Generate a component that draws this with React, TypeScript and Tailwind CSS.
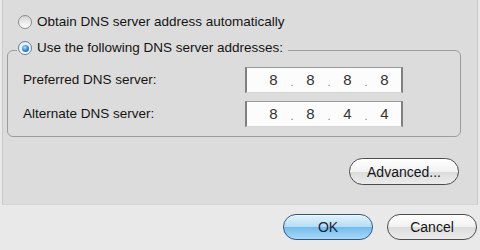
import React from "react";

const Radio = ({ checked }: { checked?: boolean }) => (
  <span
    className={`flex h-[14px] w-[14px] shrink-0 items-center justify-center rounded-full border ${
      checked
        ? "border-[#5a7ea6] bg-[linear-gradient(to_bottom,#e4edf5,#ffffff)]"
        : "border-[#8c8c8c] bg-[linear-gradient(to_bottom,#d4d4d4,#ffffff)]"
    }`}
  >
    {checked && (
      <span className="h-[7px] w-[7px] rounded-full bg-[radial-gradient(circle_at_40%_35%,#a8dcff,#2f78c8_60%,#1c4f90)]" />
    )}
  </span>
);

const IpBox = ({ parts }: { parts: string[] }) => (
  <div className="flex h-[26px] w-[158px] items-center border-x-2 border-t border-b border-x-[#808080] border-t-[#9a9a9a] border-b-[#d6d6d6] bg-[#fcfcfc] pl-[16px] text-[15px] text-[#333]">
    {parts.map((p, i) => (
      <React.Fragment key={i}>
        {i > 0 && <span className="w-[16px] pt-[4px] text-center text-[11px] text-[#777]">.</span>}
        <span className="w-[21px] text-center">{p}</span>
      </React.Fragment>
    ))}
  </div>
);

const App = () => {
  return (
    <div className="h-[250px] w-[480px] overflow-hidden bg-[#e9e9e9] font-['Liberation_Sans',Arial,sans-serif] text-[13.5px] leading-[16px] text-[#141414]">
      {/* Tab page */}
      <div className="ml-[2px] h-[205px] w-[476px] border-x border-b border-x-[#c9c9c9] border-b-[#d4d4d4] bg-[#dcdcdc]">
        <div className="ml-[15px] flex items-center gap-[5px] pt-[14px]">
          <Radio />
          <span>Obtain DNS server address automatically</span>
        </div>

        <fieldset className="ml-[4px] mt-[10px] w-[454px] rounded-[6px] border border-[#9c9c9c] pb-[9px]">
          <legend className="ml-[9px] flex items-center gap-[5px] pb-[4px] pl-[1px] pr-[5px]">
            <Radio checked />
            <span>Use the following DNS server addresses:</span>
          </legend>

          <div className="flex flex-col gap-[8px] pt-[7px]">
            <div className="flex items-center">
              <span className="w-[237px] pl-[15px]">Preferred DNS server:</span>
              <IpBox parts={["8", "8", "8", "8"]} />
            </div>
            <div className="flex items-center">
              <span className="w-[237px] pl-[15px]">Alternate DNS server:</span>
              <IpBox parts={["8", "8", "4", "4"]} />
            </div>
          </div>
        </fieldset>

        <div className="flex justify-end pr-[18px] pt-[21px]">
          <button className="h-[27px] w-[110px] rounded-full border border-[#4d4d4d] bg-[linear-gradient(to_bottom,#ffffff,#f2f2f2_50%,#dcdcdc_51%,#ececec)] text-[14px] text-[#151515] shadow-[inset_0_1px_0_#ffffff]">
            Advanced...
          </button>
        </div>
      </div>

      {/* Dialog buttons */}
      <div className="flex justify-end gap-[14px] pr-[3px] pt-[9px]">
        <button className="h-[26px] w-[90px] rounded-full border border-[#2c5684] bg-[linear-gradient(to_bottom,#e2f3fd,#b5dcf6_50%,#74bbee_51%,#a9d9f7)] text-[14px] text-[#1a2438] shadow-[inset_0_1px_0_#f4fbff]">
          OK
        </button>
        <button className="h-[26px] w-[90px] rounded-full border border-[#4d4d4d] bg-[linear-gradient(to_bottom,#ffffff,#f2f2f2_50%,#dcdcdc_51%,#ececec)] text-[14px] text-[#151515] shadow-[inset_0_1px_0_#ffffff]">
          Cancel
        </button>
      </div>
    </div>
  );
};

export default App;
